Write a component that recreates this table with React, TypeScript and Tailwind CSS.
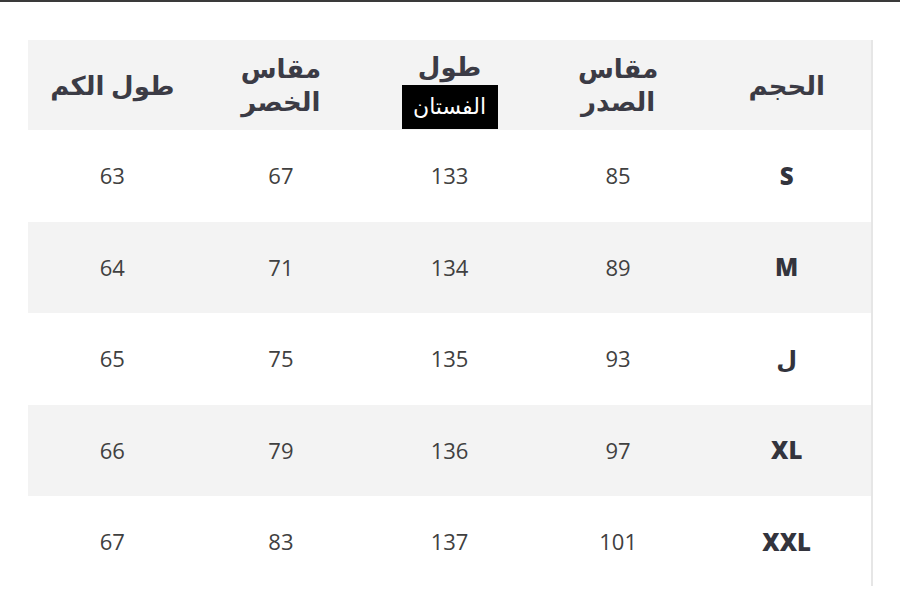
const rows = [
  { size: "S", chest: "85", length: "133", waist: "67", sleeve: "63" },
  { size: "M", chest: "89", length: "134", waist: "71", sleeve: "64" },
  { size: "ل", chest: "93", length: "135", waist: "75", sleeve: "65" },
  { size: "XL", chest: "97", length: "136", waist: "79", sleeve: "66" },
  { size: "XXL", chest: "101", length: "137", waist: "83", sleeve: "67" },
];

const head = "text-[26px] font-bold leading-[33px] text-[#3b3b45]";

export default function App() {
  return (
    <div className="w-[900px] h-[589px] bg-white font-['Open_Sans','DejaVu_Sans',sans-serif]">
      <div className="h-[2px] bg-[#3a3a3a]" />
      <div className="pt-[38px] pl-[28px]">
        <div dir="rtl" className="w-[845px] border-r-2 border-[#e6e6e6] h-[546px]">
          <div className="grid grid-cols-5 h-[90px] bg-[#f3f3f3] items-center text-center">
            <div className={head}>الحجم</div>
            <div className={head}>
              مقاس
              <br />
              الصدر
            </div>
            <div className="flex flex-col items-center pt-[8px]">
              <div className={head}>طول</div>
              <div className="mt-[2px] bg-black text-white text-[22px] leading-[44px] w-[96px] font-['DejaVu_Sans',sans-serif]">
                الفستان
              </div>
            </div>
            <div className={head}>
              مقاس
              <br />
              الخصر
            </div>
            <div className={head}>طول الكم</div>
          </div>
          {rows.map((r, i) => (
            <div
              key={r.size}
              className={`grid grid-cols-5 h-[91.5px] items-center text-center text-[22px] text-[#404040] ${
                i % 2 === 1 ? "bg-[#f3f3f3]" : "bg-white"
              }`}
            >
              <div className="text-[24px] font-extrabold text-[#33343d]">{r.size}</div>
              <div>{r.chest}</div>
              <div>{r.length}</div>
              <div>{r.waist}</div>
              <div>{r.sleeve}</div>
            </div>
          ))}
        </div>
      </div>
    </div>
  );
}
